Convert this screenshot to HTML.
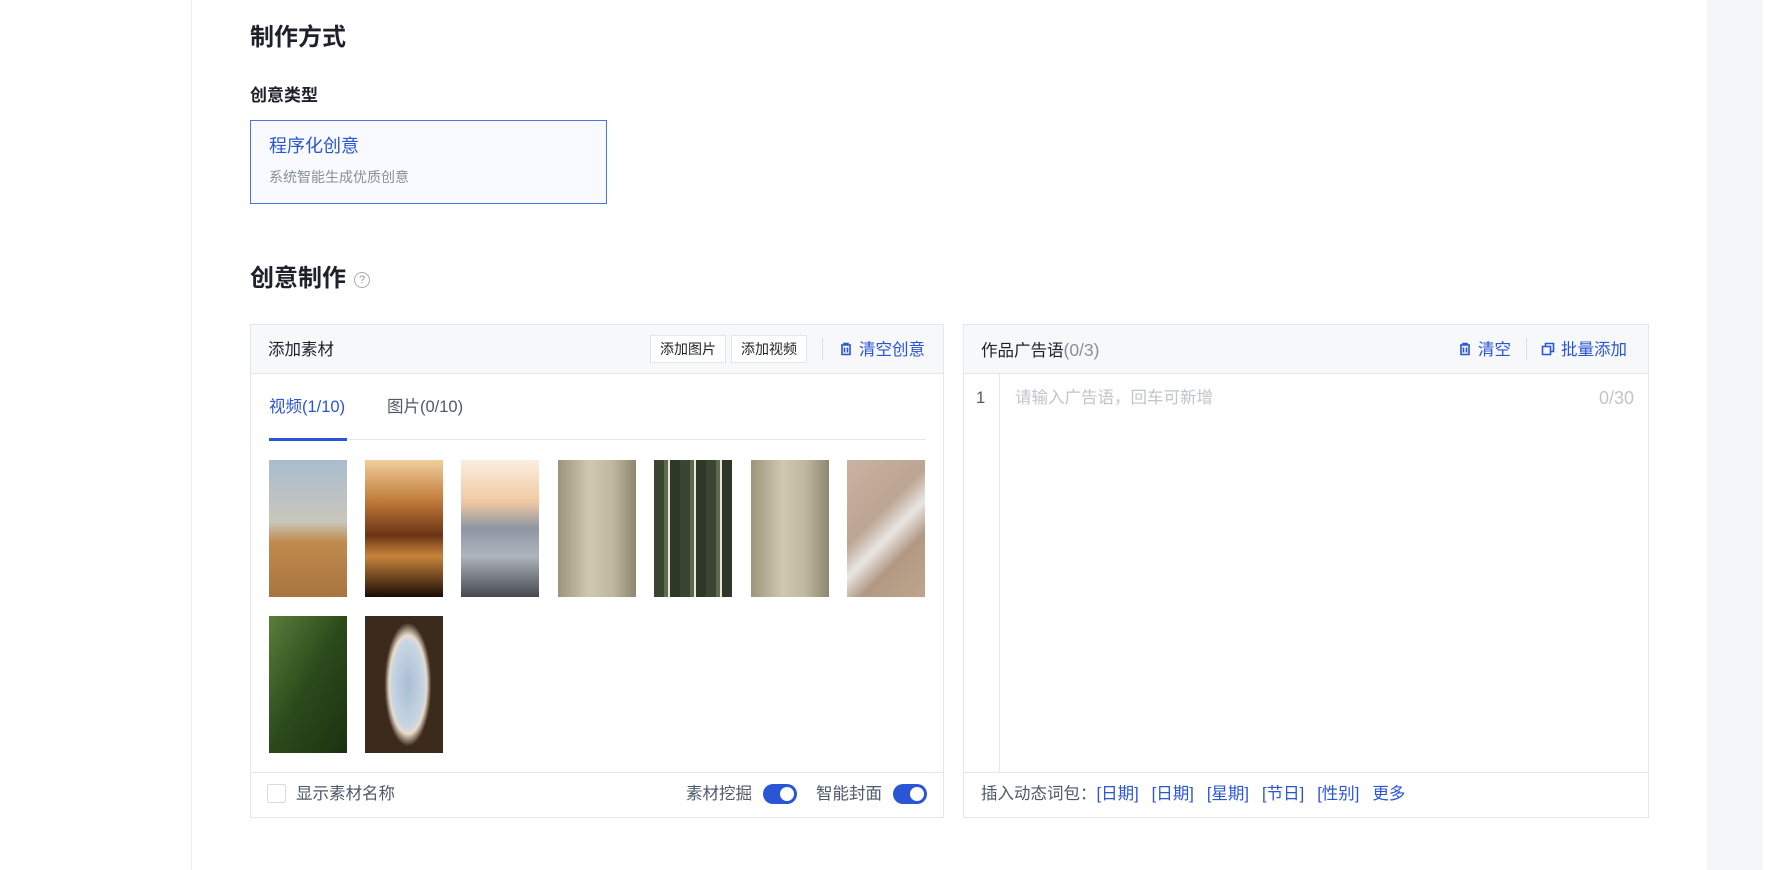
<!DOCTYPE html>
<html><head><meta charset="utf-8"><style>
*{box-sizing:border-box;margin:0;padding:0}
body{width:1790px;height:870px;background:#fff;font-family:"Liberation Sans","Noto Sans CJK SC",sans-serif;position:relative;overflow:hidden;color:#1d2129}
.a{position:absolute;white-space:nowrap}
.l{line-height:24px;height:24px}
.blue{color:#2a55d4}
.panel{position:absolute;border:1px solid #e5e6eb;background:#fff}
.hd{position:absolute;left:0;right:0;top:0;height:49px;background:#f7f8fa;border-bottom:1px solid #e5e6eb}
.btn{position:absolute;top:10px;height:28px;width:76px;text-align:center;border:1px solid #e5e6eb;background:#fff;font-size:14px;line-height:26px;color:#1d2129}
.th{position:absolute;width:78px;height:137px}
.tg{position:absolute;width:34px;height:20px;border-radius:10px;background:#2a55d4}
.tg::after{content:"";position:absolute;right:3px;top:3px;width:14px;height:14px;border-radius:50%;background:#fff}
.kw span{margin-right:13px}
</style></head><body>
<div class="a" style="left:191px;top:0;width:1px;height:870px;background:#eceef1"></div>
<div class="a" style="left:1707px;top:0;width:56px;height:870px;background:#f5f6f8"></div>

<div class="a" style="left:250px;top:22px;font-size:24px;line-height:32px;font-weight:bold">制作方式</div>
<div class="a l" style="left:250px;top:84px;font-size:17px;font-weight:bold">创意类型</div>
<div class="a" style="left:250px;top:120px;width:357px;height:84px;border:1.5px solid #4a76d9;background:#f8faff"></div>
<div class="a l" style="left:269px;top:134px;font-size:18px"><span class="blue">程序化创意</span></div>
<div class="a l" style="left:269px;top:165px;font-size:14px;color:#86909c">系统智能生成优质创意</div>

<div class="a" style="left:250px;top:263px;font-size:24px;line-height:32px;font-weight:bold">创意制作</div>
<div class="a" style="left:354px;top:272px;width:16px;height:16px;border:1.3px solid #aab;border-radius:50%;font-size:11px;line-height:14px;text-align:center;color:#999">?</div>

<div class="panel" style="left:250px;top:324px;width:694px;height:494px">
 <div class="hd"></div>
 <div class="a l" style="left:17px;top:13px;font-size:16.5px;color:#1d2129">添加素材</div>
 <div class="btn" style="left:399px">添加图片</div>
 <div class="btn" style="left:480px">添加视频</div>
 <div class="a" style="left:571px;top:13px;width:1px;height:22px;background:#e0e0e0"></div>
 <div class="a l blue" style="left:588px;top:13px;font-size:16.5px"><svg width="14" height="14" viewBox="0 0 14 14" style="vertical-align:-1px;margin-right:6px"><path d="M2 3h10M5 3V1.5h4V3M3 3v9.5h8V3M5.5 5.5v5M8.5 5.5v5" stroke="#2a55d4" stroke-width="1.6" fill="none"/></svg>清空创意</div>
 <div class="a l blue" style="left:18px;top:70px;font-size:16.5px">视频(1/10)</div>
 <div class="a l" style="left:136px;top:70px;font-size:16.5px;color:#4e5969">图片(0/10)</div>
 <div class="a" style="left:18px;top:114px;width:657px;height:1px;background:#e5e6eb"></div>
 <div class="a" style="left:18px;top:113px;width:78px;height:3px;background:#2a55d4"></div>
 <div class="th" style="left:18px;top:135px;background:linear-gradient(#a9bccf 0%,#c9c6bb 45%,#c08a4e 60%,#a7753f 100%)"></div>
 <div class="th" style="left:114px;top:135px;background:linear-gradient(#f0cf9a 0%,#c07a3a 30%,#6a3414 55%,#c8843c 70%,#1c0d06 100%)"></div>
 <div class="th" style="left:210px;top:135px;background:linear-gradient(#fbeee0 0%,#f2c9a3 30%,#8d96a3 50%,#aeb4bc 70%,#45494f 100%)"></div>
 <div class="th" style="left:307px;top:135px;background:linear-gradient(90deg,#9c947b,#cfc8b0 40%,#bfb89f 70%,#8d8670)"></div>
 <div class="th" style="left:403px;top:135px;background:repeating-linear-gradient(90deg,#3b4532 0 10px,#5d6a4c 10px 14px,#e8e6dc 14px 16px,#2e3828 16px 26px)"></div>
 <div class="th" style="left:500px;top:135px;background:linear-gradient(90deg,#9c947b,#cfc8b0 40%,#bfb89f 70%,#8d8670)"></div>
 <div class="th" style="left:596px;top:135px;background:linear-gradient(135deg,#c9b3a0 0%,#bca592 40%,#e9e6e2 55%,#b19984 70%,#c0a58b 100%)"></div>
 <div class="th" style="left:18px;top:291px;background:linear-gradient(120deg,#5b7d3b,#2b4a1b 50%,#1c3210)"></div>
 <div class="th" style="left:114px;top:291px;background:radial-gradient(ellipse 30% 45% at 55% 50%,#a9bdd4 0%,#c8d6e3 70%,#eadccb 80%,#3c2b1c 100%)"></div>
 <div class="a" style="left:0;right:0;top:447px;height:1px;background:#e5e6eb"></div>
 <div class="a" style="left:16px;top:459px;width:19px;height:19px;border:1px solid #d8dbe0;border-radius:2px"></div>
 <div class="a l" style="left:45px;top:457px;font-size:16.5px;color:#4e5969">显示素材名称</div>
 <div class="a l" style="left:435px;top:457px;font-size:16.5px;color:#4e5969">素材挖掘</div>
 <div class="tg" style="left:512px;top:459px"></div>
 <div class="a l" style="left:565px;top:457px;font-size:16.5px;color:#4e5969">智能封面</div>
 <div class="tg" style="left:642px;top:459px"></div>
</div>

<div class="panel" style="left:963px;top:324px;width:686px;height:494px">
 <div class="hd"></div>
 <div class="a l" style="left:17px;top:13px;font-size:16.5px;color:#1d2129">作品广告语<span style="color:#86909c;font-size:17.5px">(0/3)</span></div>
 <div class="a l blue" style="left:494px;top:13px;font-size:16.5px"><svg width="14" height="14" viewBox="0 0 14 14" style="vertical-align:-1px;margin-right:6px"><path d="M2 3h10M5 3V1.5h4V3M3 3v9.5h8V3M5.5 5.5v5M8.5 5.5v5" stroke="#2a55d4" stroke-width="1.6" fill="none"/></svg>清空</div>
 <div class="a" style="left:562px;top:13px;width:1px;height:22px;background:#e0e0e0"></div>
 <div class="a l blue" style="left:577px;top:13px;font-size:16.5px"><svg width="14" height="14" viewBox="0 0 14 14" style="vertical-align:-1px;margin-right:6px"><path d="M1.5 4.5h8v8h-8zM4.5 4.5V1.5h8v8h-3" stroke="#2a55d4" stroke-width="1.6" fill="none"/></svg>批量添加</div>
 <div class="a" style="left:35px;top:49px;width:1px;height:398px;background:#e5e6eb"></div>
 <div class="a l" style="left:12px;top:61px;font-size:16.5px;color:#4e5969">1</div>
 <div class="a l" style="left:51px;top:61px;font-size:16.5px;color:#c0c4cc">请输入广告语，回车可新增</div>
 <div class="a l" style="right:14px;top:61px;font-size:18px;color:#c0c4cc">0/30</div>
 <div class="a" style="left:0;right:0;top:447px;height:1px;background:#e5e6eb"></div>
 <div class="a l kw" style="left:17px;top:457px;font-size:16.5px;color:#4e5969">插入动态词包：<span class="blue">[日期]</span><span class="blue">[日期]</span><span class="blue">[星期]</span><span class="blue">[节日]</span><span class="blue">[性别]</span><span class="blue">更多</span></div>
</div>
</body></html>
